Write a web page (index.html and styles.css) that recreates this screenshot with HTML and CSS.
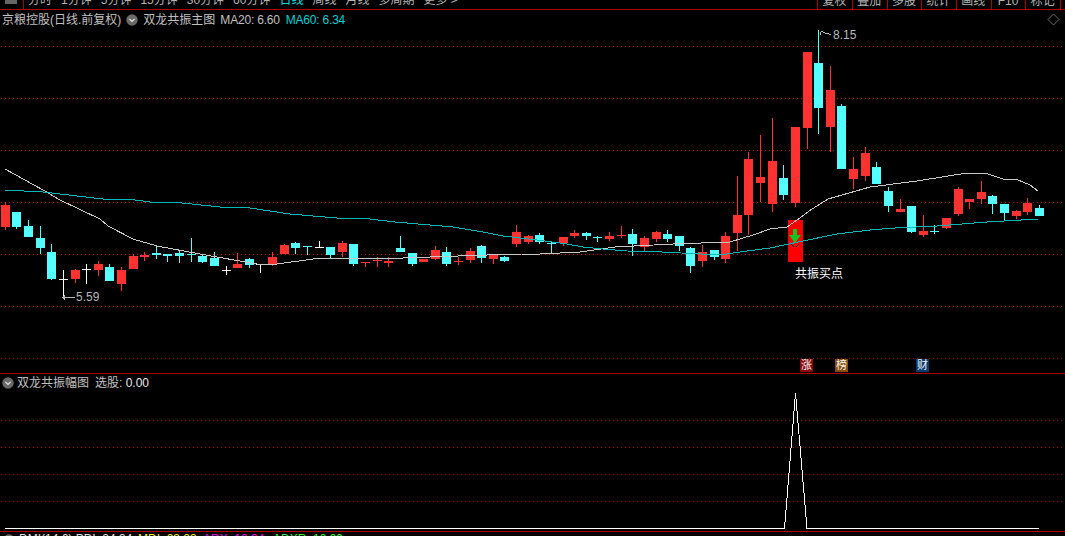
FILE: index.html
```html
<!DOCTYPE html>
<html lang="zh">
<head>
<meta charset="utf-8">
<title>京粮控股</title>
<link rel="stylesheet" href="styles.css">
</head>
<body>
<div class="page">
  <nav class="toolbar">
    <div class="tool-home"><span class="tool-home-icon"></span></div>
    <div class="periods">
      <span>分时</span><span>1分钟</span><span>5分钟</span><span>15分钟</span><span>30分钟</span><span>60分钟</span>
      <span class="active">日线</span><span>周线</span><span>月线</span><span>多周期</span><span>更多 &gt;</span>
    </div>
    <div class="tools">
      <span>复权</span><span>叠加</span><span>多股</span><span>统计</span><span>画线</span><span>F10</span><span>标记</span>
    </div>
  </nav>

  <section class="panel panel-main">
    <svg class="chart" id="main-chart" width="1065" height="363" viewBox="0 10 1065 363"></svg>
    <header class="legend">
      <span class="legend-name">京粮控股(日线.前复权)</span>
      <svg class="toggle" width="12" height="12" viewBox="0 0 12 12"><circle cx="6" cy="6" r="5.7"/><path d="M3.4 4.8 6 7.4 8.6 4.8"/></svg>
      <span class="legend-formula">双龙共振主图</span>
      <span class="num">MA20: 6.60</span>
      <span class="num cyan">MA60: 6.34</span>
    </header>
    <svg class="diamond" width="13" height="13" viewBox="0 0 13 13"><path d="M6.5 1 12 6.5 6.5 12 1 6.5Z"/></svg>
    <span class="price price-high">8.15</span>
    <span class="price price-low">5.59</span>
    <span class="signal-label">共振买点</span>
    <span class="tag tag-up">涨</span>
    <span class="tag tag-list">榜</span>
    <span class="tag tag-fin">财</span>
  </section>

  <section class="panel panel-sub">
    <svg class="chart" width="1065" height="157" viewBox="0 374 1065 157" shape-rendering="crispEdges">
      <g class="grid-dim">
        <line x1="1" y1="420.5" x2="1065" y2="420.5"/>
        <line x1="1" y1="447.5" x2="1065" y2="447.5"/>
        <line x1="1" y1="474.5" x2="1065" y2="474.5"/>
        <line x1="1" y1="501.5" x2="1065" y2="501.5"/>
      </g>
      <polyline class="spike" points="5,528.5 784.5,528.5 795.5,393 807,528.5 1039,528.5"/>
    </svg>
    <header class="legend legend-sub">
      <svg class="toggle" width="12" height="12" viewBox="0 0 12 12"><circle cx="6" cy="6" r="5.7"/><path d="M3.4 4.8 6 7.4 8.6 4.8"/></svg>
      <span class="legend-formula">双龙共振幅图</span>
      <span class="legend-value">选股: <b>0.00</b></span>
    </header>
  </section>

  <footer class="bottom">
    <svg class="toggle" width="12" height="12" viewBox="0 0 12 12"><circle cx="6" cy="6" r="5.7"/></svg>
    <span class="b-white">DMI(14,6) PDI: 24.34</span>
    <span class="b-yellow">MDI: 23.23</span>
    <span class="b-magenta">ADX: 12.34</span>
    <span class="b-green">ADXR: 10.99</span>
  </footer>
</div>
<script src="chart.js"></script>
</body>
</html>
```
FILE: styles.css
```css
* { box-sizing: border-box; }
html, body { margin: 0; background: #000; }
body { font: 12px/14px "Liberation Sans", "Noto Sans CJK SC", sans-serif; color: #c0c0c0; }
.page { width: 1065px; height: 536px; overflow: hidden; display: flex; flex-direction: column; background: #000; }

.toolbar { flex: none; height: 10px; display: flex; overflow: hidden; border-bottom: 1px solid #b00000; }
.tool-home { flex: none; width: 24px; border-right: 1px solid #b00000; padding-left: 5px; }
.tool-home-icon { display: block; width: 12px; height: 4px; background: #666; }
.periods { display: flex; gap: 9px; margin-left: 4px; margin-top: -7px; line-height: 14px; white-space: nowrap; color: #b4b4b4; }
.periods .active { color: #00e0e0; }
.tools { display: flex; margin-left: auto; margin-right: 4px; border-right: 1px solid #b00000; }
.tools span { width: 34.7px; margin-top: -7px; line-height: 16px; height: 16px; text-align: center; color: #b4b4b4; position: relative; }
.tools span::before { content: ""; position: absolute; left: 0; top: 0; bottom: 0; width: 1px; background: #b00000; }

.panel { position: relative; flex: none; }
.panel-main { height: 363px; }
.panel-sub { height: 158px; border-top: 1px solid #b00000; }
.chart { position: absolute; left: 0; top: 0; display: block; }

.legend { position: relative; display: flex; align-items: center; height: 19px; padding-left: 2px; white-space: nowrap; }
.legend-name { margin-right: 5px; }
.legend-formula { margin-left: 5px; }
.toggle { flex: none; }
.toggle circle { fill: #6a6a6a; }
.toggle path { fill: none; stroke: #ececec; stroke-width: 1.2; }
.num { margin-left: 5px; letter-spacing: -0.2px; }
.num + .num { margin-left: 6px; }
.cyan { color: #00d2d2; }
.legend-sub { height: 17px; }
.legend-sub .legend-formula { margin-left: 3px; }
.legend-value { margin-left: 6px; }
.legend-value b { font-weight: 400; color: #e8e8e8; }

.diamond { position: absolute; left: 1047px; top: 3px; }
.diamond path { fill: none; stroke: #6a6a6a; }

.price { position: absolute; color: #b8b8b8; }
.price-high { left: 833px; top: 18px; }
.price-low { left: 76px; top: 280px; }
.signal-label { position: absolute; left: 795px; top: 257px; color: #fff; }

.tag { position: absolute; top: 349px; width: 13px; height: 13px; font-size: 11px; line-height: 13px; text-align: center; color: #f4f4f4; }
.tag-up { left: 800px; background: #8a0a0a; }
.tag-list { left: 835px; background: #8a4a08; }
.tag-fin { left: 916px; background: #0a3a70; }

.bottom { flex: none; height: 5px; border-top: 1px solid #b00000; display: flex; padding-left: 3px; overflow: hidden; white-space: nowrap; align-items: flex-start; }
.bottom .toggle { margin-top: 2px; margin-right: 4px; }
.b-white { color: #e0e0e0; width: 119px; }
.b-yellow { color: #f0f000; width: 65px; }
.b-magenta { color: #f000f0; width: 70px; }
.b-green { color: #30f030; }

/* drawn by chart.js */
.grid line { stroke: #c80000; stroke-dasharray: 1 3; }
.grid-dim line { stroke: #900000; stroke-dasharray: 1 3; }
.up { fill: #ff3232; }
.down { fill: #54ffff; }
.flat { fill: #ffffff; }
.ma20, .ma60, .spike, .mark { fill: none; }
.ma20 { stroke: #c8c8c8; }
.ma60 { stroke: #00b8b8; }
.spike { stroke: #ffffff; }
.mark { stroke: #b8b8b8; }
.signal-box { fill: #ff0000; }
.signal-arrow { fill: #10c820; }
.signal-ghost { fill: none; stroke: #000; }
```
FILE: chart.js
```js
// [kind, bodyTop, bodyBottom, wickTop, wickBottom]  u=up d=down f=flat white
var candles = [
  ['u',205,227,202,230],['d',212,227,212,229],['d',226,237,220,237],['d',238,248,226,254],['d',252,279,244,280],
  ['f',279,280,270,297],['u',270,279,269,283],['f',269,270,264,284],['u',264,270,261,276],['d',267,281,264,281],
  ['u',270,284,267,291],['u',256,269,254,269],['u',255,257,252,261],['d',253,255,246,259],['d',254,256,254,262],
  ['d',253,256,250,263],['d',254,255,238,262],['d',256,262,254,263],['d',258,266,252,266],['f',270,271,266,275],
  ['u',264,268,253,268],['d',259,265,258,268],['f',264,265,264,273],['u',257,264,252,266],['u',245,254,244,254],
  ['d',243,248,242,254],['d',246,247,246,255],['f',247,248,241,248],['d',247,255,247,258],['u',243,252,241,257],
  ['d',244,264,244,266],['u',262,263,262,267],['u',260,261,257,267],['u',261,263,257,267],['d',248,252,236,252],
  ['d',253,264,253,266],['u',259,262,259,262],['u',250,259,246,260],['d',252,264,247,266],['u',261,262,257,265],
  ['u',251,260,248,263],['d',246,258,245,263],['u',255,259,255,264],['d',257,261,256,262],['u',232,244,225,247],
  ['u',236,242,235,244],['d',235,242,233,244],['d',243,244,241,254],['u',237,243,237,246],['u',233,236,230,238],
  ['d',233,236,232,240],['d',237,238,236,242],['u',236,239,232,241],['u',235,236,226,238],['d',234,244,229,256],
  ['u',238,247,236,251],['u',232,239,231,242],['d',234,239,230,242],['d',236,246,236,251],['d',248,266,247,273],
  ['u',252,261,245,267],['d',250,257,250,260],['u',236,259,232,263],['u',215,233,176,251],['u',159,215,152,235],
  ['u',177,183,135,202],['u',161,204,118,212],['d',178,195,165,200],['u',127,203,127,207],['u',52,128,52,149],
  ['d',63,108,30,134],['u',90,127,66,152],['d',106,169,104,169],['u',169,179,157,189],['u',153,176,147,181],
  ['d',167,184,162,184],['d',191,206,187,212],['u',209,212,199,212],['d',206,232,206,233],['u',231,235,215,237],
  ['d',231,232,225,234],['u',218,228,218,229],['u',189,214,187,216],['u',199,202,199,209],['u',192,199,181,204],
  ['d',196,204,195,214],['d',204,213,204,221],['u',211,216,210,219],['u',203,212,198,215],['d',208,216,205,216]
];
var ma20 = '5,169 43,190 60,200 100,219 108,226 133,239 157,246 200,254 257,264 270,265 313,259 338,258 403,258 430,257 487,255 522,254 540,254 580,252 615,247 673,244 730,242 753,235 770,229 787,227 800,218 809,211 828,199 870,187 917,181 967,173 985,173 1003,179 1018,180 1030,185 1038,191';
var ma60 = '5,190 43,192 77,196 103,199 128,199 150,202 173,202 220,207 243,207 270,211 290,214 313,216 337,218 370,219 395,222 430,225 453,227 483,232 503,236 537,240 567,244 583,247 603,249 627,251 662,252 720,255 747,251 770,248 803,241 837,234 870,230 895,228 937,226 987,222 1038,219';

var NS = 'http://www.w3.org/2000/svg';
var svg = document.getElementById('main-chart');

function add(parent, tag, attrs) {
  var el = document.createElementNS(NS, tag);
  for (var k in attrs) el.setAttribute(k, attrs[k]);
  parent.appendChild(el);
  return el;
}

svg.setAttribute('shape-rendering', 'crispEdges');
var grid = add(svg, 'g', { 'class': 'grid' });
[46, 98, 150, 202, 254, 306].forEach(function (y) {
  add(grid, 'line', { x1: 1, x2: 1065, y1: y + 0.5, y2: y + 0.5 });
});
var dim = add(svg, 'g', { 'class': 'grid-dim' });
add(dim, 'line', { x1: 1, x2: 1065, y1: 358.5, y2: 358.5 });

candles.forEach(function (c, i) {
  var left = Math.round(0.8 + i * 11.62);
  var cls = { u: 'up', d: 'down', f: 'flat' }[c[0]];
  add(svg, 'rect', { 'class': cls, x: left + 4, y: c[3], width: 1, height: c[4] - c[3] });
  add(svg, 'rect', { 'class': cls, x: left, y: c[1], width: 9, height: c[2] - c[1] });
});

add(svg, 'rect', { 'class': 'signal-box', x: 788, y: 220, width: 15, height: 42 });
add(svg, 'polyline', { 'class': 'ma20', points: ma20 });
add(svg, 'polyline', { 'class': 'ma60', points: ma60 });
add(svg, 'path', { 'class': 'signal-arrow', d: 'M793 229h4v6h4l-6 8-6-8h4z', 'shape-rendering': 'auto' });
add(svg, 'path', { 'class': 'signal-ghost', d: 'M791 244l3 3M799 244l-3 3' });

add(svg, 'path', { 'class': 'mark', d: 'M820 32.5l2-1 3 1.5 6 1.5M820.5 33v2M63 297.5h12M65 295.5l-2 2 2 2' });
```
